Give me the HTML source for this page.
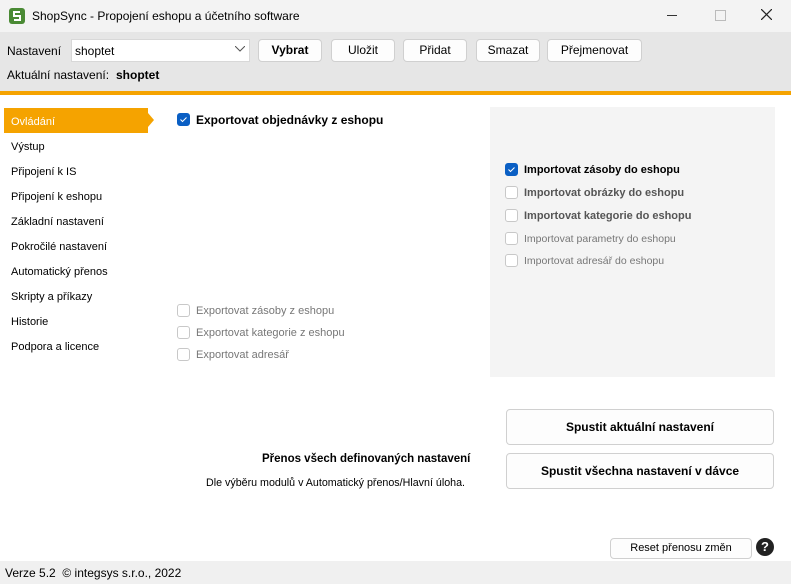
<html><head><style>
body{margin:0;width:791px;height:584px;position:relative;font-family:"Liberation Sans",sans-serif;font-size:11px;color:#000;background:#fff;overflow:hidden}
.a{position:absolute;white-space:nowrap}
.btn{position:absolute;background:#fdfdfd;border:1px solid #d0d0d0;border-radius:4px;text-align:center;font-size:12px}
.cb{position:absolute;width:11px;height:11px;border:1px solid #c8c8c8;border-radius:3px;background:#fff}
.cb.on{background:#0a5fc4;border-color:#0a5fc4}
.g{color:#777;font-size:11px}
.b{font-weight:bold}
.nav{position:absolute;left:11px;font-size:11px}
</style></head><body>
<div class="a" style="left:0;top:0;width:791px;height:32px;background:#f3f3f3"></div>
<div class="a" style="left:9px;top:8px;width:16px;height:16px;background:#4a8a34;border-radius:3px"><svg width="16" height="16"><path d="M11 4L5 4 5 8 11 8 11 12 5 12" stroke="#fff" stroke-width="2" fill="none"/></svg></div>
<div class="a" style="left:32px;top:9px;font-size:12px">ShopSync - Propojení eshopu a účetního software</div>
<div class="a" style="left:667px;top:15px;width:10px;height:1px;background:#333"></div>
<div class="a" style="left:715px;top:10px;width:9px;height:9px;border:1px solid #bbb"></div>
<svg class="a" style="left:761px;top:9px" width="11" height="11"><path d="M0 0L11 11M11 0L0 11" stroke="#222" stroke-width="1.2"/></svg>
<div class="a" style="left:0;top:32px;width:791px;height:59px;background:#e6e6e6"></div>
<div class="a" style="left:0;top:91px;width:791px;height:4px;background:#f5a300"></div>
<div class="a" style="left:7px;top:44px;font-size:12px">Nastavení</div>
<div class="a" style="left:71px;top:39px;width:177px;height:21px;background:#fff;border:1px solid #d8d8d8"></div>
<div class="a" style="left:75px;top:44px;font-size:12px">shoptet</div>
<svg class="a" style="left:235px;top:46px" width="10" height="6"><path d="M0 0L5 5 10 0" stroke="#555" fill="none"/></svg>
<div class="btn b" style="left:258px;top:39px;width:62px;height:21px;line-height:21px">Vybrat</div>
<div class="btn" style="left:331px;top:39px;width:62px;height:21px;line-height:21px">Uložit</div>
<div class="btn" style="left:403px;top:39px;width:62px;height:21px;line-height:21px">Přidat</div>
<div class="btn" style="left:476px;top:39px;width:62px;height:21px;line-height:21px">Smazat</div>
<div class="btn" style="left:547px;top:39px;width:93px;height:21px;line-height:21px">Přejmenovat</div>
<div class="a" style="left:7px;top:68px;font-size:12px">Aktuální nastavení:</div>
<div class="a b" style="left:116px;top:68px;font-size:12px">shoptet</div>
<div class="a" style="left:4px;top:108px;width:144px;height:25px;background:#f5a300"></div>
<div class="a" style="left:148px;top:113px;width:0;height:0;border-top:7px solid transparent;border-bottom:7px solid transparent;border-left:6px solid #f5a300"></div>
<div class="nav" style="top:116px;color:#fff">Ovládání</div>
<div class="nav" style="top:141px">Výstup</div>
<div class="nav" style="top:166px">Připojení k IS</div>
<div class="nav" style="top:191px">Připojení k eshopu</div>
<div class="nav" style="top:216px">Základní nastavení</div>
<div class="nav" style="top:241px">Pokročilé nastavení</div>
<div class="nav" style="top:266px">Automatický přenos</div>
<div class="nav" style="top:291px">Skripty a příkazy</div>
<div class="nav" style="top:316px">Historie</div>
<div class="nav" style="top:341px">Podpora a licence</div>
<div class="cb on" style="left:177px;top:113px"><svg width="11" height="11" style="position:absolute;left:0;top:0"><path d="M2.5 5.5L4.5 7.5 8.5 3.5" stroke="#fff" fill="none"/></svg></div>
<div class="a b" style="left:196px;top:113px;font-size:12px">Exportovat objednávky z eshopu</div>
<div class="cb" style="left:177px;top:304px"></div><div class="a g" style="left:196px;top:305px">Exportovat zásoby z eshopu</div>
<div class="cb" style="left:177px;top:326px"></div><div class="a g" style="left:196px;top:327px">Exportovat kategorie z eshopu</div>
<div class="cb" style="left:177px;top:348px"></div><div class="a g" style="left:196px;top:349px">Exportovat adresář</div>
<div class="a" style="left:490px;top:107px;width:285px;height:270px;background:#f4f4f4"></div>
<div class="cb on" style="left:505px;top:163px"><svg width="11" height="11" style="position:absolute;left:0;top:0"><path d="M2.5 5.5L4.5 7.5 8.5 3.5" stroke="#fff" fill="none"/></svg></div><div class="a b" style="left:524px;top:164px">Importovat zásoby do eshopu</div>
<div class="cb" style="left:505px;top:186px"></div><div class="a b" style="left:524px;top:187px;color:#555">Importovat obrázky do eshopu</div>
<div class="cb" style="left:505px;top:209px"></div><div class="a b" style="left:524px;top:210px;color:#555">Importovat kategorie do eshopu</div>
<div class="cb" style="left:505px;top:232px"></div><div class="a g" style="left:524px;top:233px;font-size:10.5px">Importovat parametry do eshopu</div>
<div class="cb" style="left:505px;top:254px"></div><div class="a g" style="left:524px;top:255px;font-size:10.5px">Importovat adresář do eshopu</div>
<div class="btn b" style="left:506px;top:409px;width:266px;height:34px;line-height:34px;font-size:12px">Spustit aktuální nastavení</div>
<div class="btn b" style="left:506px;top:453px;width:266px;height:34px;line-height:34px;font-size:12px">Spustit všechna nastavení v dávce</div>
<div class="a b" style="left:262px;top:453px;font-size:11.5px">Přenos všech definovaných nastavení</div>
<div class="a" style="left:206px;top:477px;font-size:10.7px">Dle výběru modulů v Automatický přenos/Hlavní úloha.</div>
<div class="btn" style="left:610px;top:538px;width:140px;height:19px;line-height:19px;font-size:11px">Reset přenosu změn</div>
<div class="a" style="left:756px;top:538px;width:18px;height:18px;border-radius:50%;background:#222;color:#fff;text-align:center;font-weight:bold;font-size:13px;line-height:18px">?</div>
<div class="a" style="left:0;top:561px;width:791px;height:23px;background:#f0f0f0"></div>
<div class="a" style="left:5px;top:566px;font-size:12px">Verze 5.2 &nbsp;© integsys s.r.o., 2022</div>
</body></html>
